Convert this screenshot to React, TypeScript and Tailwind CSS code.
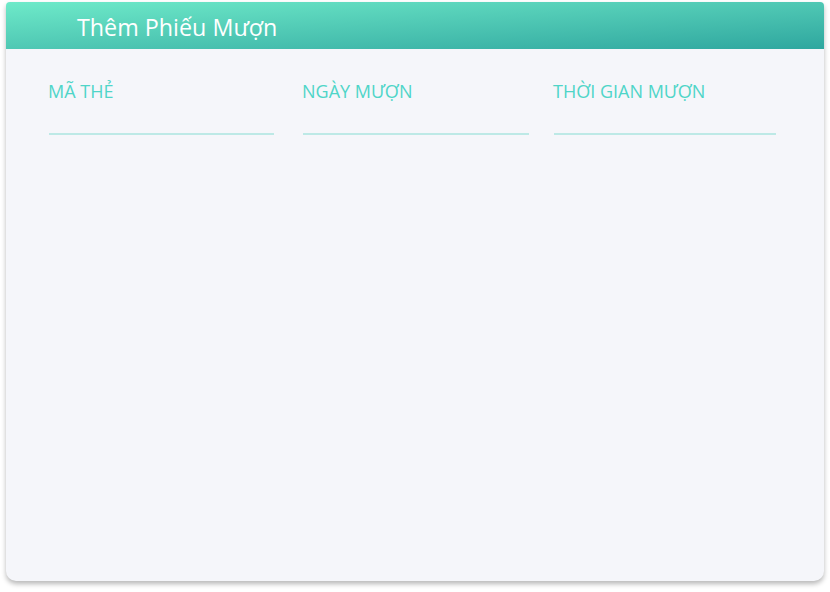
import React from "react";

const fields = [
  { label: "Mã thẻ", cls: "w-[225px]" },
  { label: "Ngày mượn", cls: "w-[226px] ml-[29px]" },
  { label: "Thời gian mượn", cls: "w-[222px] ml-[25px]" },
];

export default function App() {
  return (
    <div
      className="w-[830px] h-[592px] bg-white pt-[2px] px-[6px]"
      style={{ fontFamily: "'Open Sans', 'Noto Sans', sans-serif" }}
    >
      <div className="h-[579px] bg-[#f5f6fa] rounded-t-[4px] rounded-b-[10px] shadow-[0_3px_5px_rgba(0,0,0,0.28)] flex flex-col">
        {/* Header */}
        <div className="h-[47px] rounded-t-[4px] bg-gradient-to-br from-[#6eeac9] to-[#2ea79f] pl-[71px] pt-[14px]">
          <h1 className="text-[23.3px] text-white leading-none">Thêm Phiếu Mượn</h1>
        </div>

        {/* Form */}
        <div className="flex pl-[43px] pt-[30px]">
          {fields.map((f) => (
            <div key={f.label} className={`flex flex-col ${f.cls}`}>
              <label className="text-[18px] leading-[24px] uppercase text-[#4fd5c8] -ml-px">{f.label}</label>
              <div className="mt-[30px] h-[2px] bg-[#bde9e6]" />
            </div>
          ))}
        </div>
      </div>
    </div>
  );
}
